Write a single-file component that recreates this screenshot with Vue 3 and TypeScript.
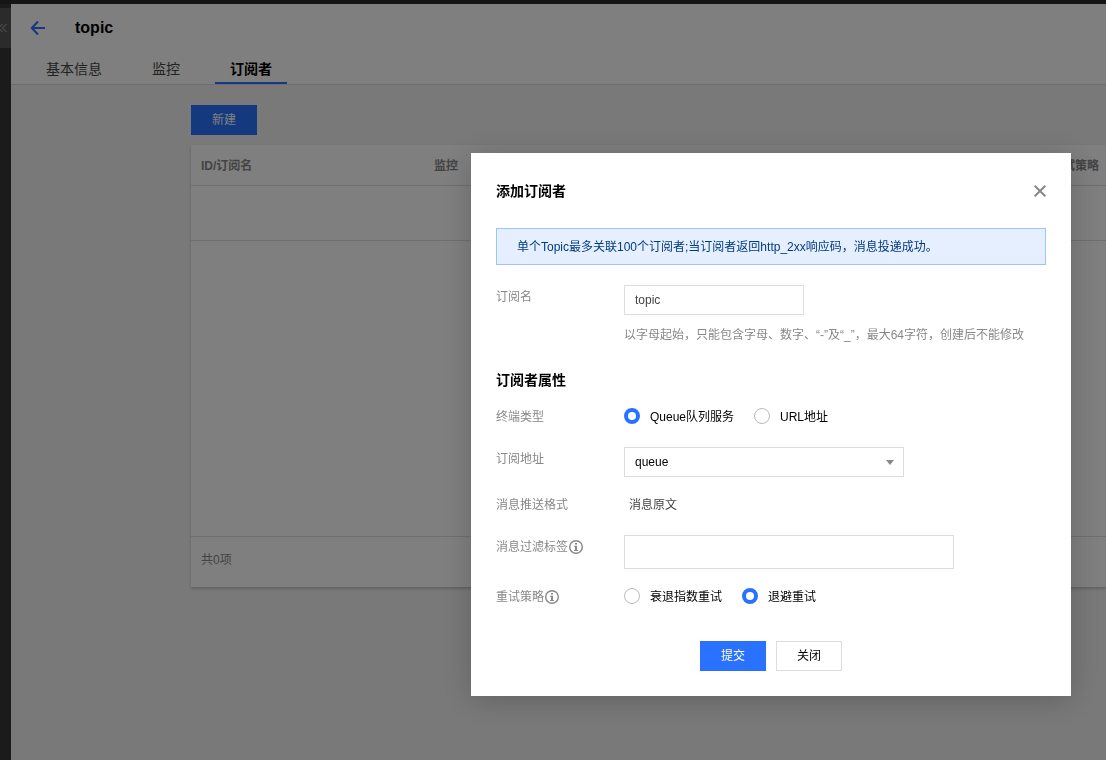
<script setup lang="ts">
import { ref } from 'vue'

const tabs = ['基本信息', '监控', '订阅者']
const activeTab = ref('订阅者')

const name = ref('topic')
const endpointType = ref('queue')
const address = ref('queue')
const filterTag = ref('')
const retry = ref('backoff')

const endpointOptions = [
  { value: 'queue', label: 'Queue队列服务' },
  { value: 'url', label: 'URL地址' },
]
const retryOptions = [
  { value: 'exponential', label: '衰退指数重试' },
  { value: 'backoff', label: '退避重试' },
]
</script>

<template>
  <div class="page">
    <div class="topbar"></div>
    <div class="shell">
      <aside class="rail">
        <button class="collapse" type="button" aria-label="展开">
          <svg width="8" height="10" viewBox="0 0 8 10" fill="none" stroke="currentColor">
            <path d="M2.5 1-1.5 5l4 4M6.5 1l-4 4 4 4" />
          </svg>
        </button>
      </aside>
      <main class="main">
        <header class="header">
          <div class="heading">
            <a class="back" href="#" aria-label="返回">
              <svg width="16" height="16" viewBox="0 0 16 16" fill="none" stroke="currentColor" stroke-width="2">
                <path d="M15 8H2M8 1.5 1.8 8 8 14.5" />
              </svg>
            </a>
            <h1>topic</h1>
          </div>
          <nav class="tabs">
            <a
              v-for="tab in tabs"
              :key="tab"
              href="#"
              :class="['tab', { active: tab === activeTab }]"
              @click.prevent="activeTab = tab"
            >{{ tab }}</a>
          </nav>
        </header>
        <section class="content">
          <button class="btn primary" type="button">新建</button>
          <div class="card">
            <table>
              <colgroup>
                <col class="col-id" />
                <col class="col-monitor" />
                <col />
              </colgroup>
              <thead>
                <tr><th>ID/订阅名</th><th>监控</th><th>重试策略</th></tr>
              </thead>
              <tbody>
                <tr><td colspan="3"></td></tr>
              </tbody>
            </table>
            <div class="blank"></div>
            <footer class="total">共0项</footer>
          </div>
        </section>
      </main>
    </div>

    <div class="overlay">
      <form class="dialog" role="dialog" aria-labelledby="dialog-title" @submit.prevent>
        <div class="dialog-head">
          <h2 id="dialog-title">添加订阅者</h2>
          <button class="close" type="button" aria-label="关闭">
            <svg width="12" height="12" viewBox="0 0 12 12" fill="none" stroke="currentColor" stroke-width="2">
              <path d="M.7.7l10.6 10.6M11.3.7.7 11.3" />
            </svg>
          </button>
        </div>

        <p class="notice">单个Topic最多关联100个订阅者;当订阅者返回http_2xx响应码，消息投递成功。</p>

        <div class="row">
          <label class="label" for="sub-name">订阅名</label>
          <div>
            <input id="sub-name" v-model="name" class="field name" type="text" />
            <p class="hint">以字母起始，只能包含字母、数字、“-”及“_”，最大64字符，创建后不能修改</p>
          </div>
        </div>

        <h3>订阅者属性</h3>

        <div class="rows">
          <div class="row" role="radiogroup" aria-labelledby="type-label">
            <span id="type-label" class="label">终端类型</span>
            <div class="radios">
              <label v-for="o in endpointOptions" :key="o.value">
                <input v-model="endpointType" type="radio" name="endpoint" :value="o.value" />{{ o.label }}
              </label>
            </div>
          </div>
          <div class="row">
            <label class="label" for="address">订阅地址</label>
            <div class="select">
              <select id="address" v-model="address" class="field">
                <option value="queue">queue</option>
              </select>
              <svg width="8" height="5" viewBox="0 0 8 5"><path d="M0 0h8L4 5z" fill="#888" /></svg>
            </div>
          </div>
          <div class="row">
            <span class="label">消息推送格式</span>
            <span class="static">消息原文</span>
          </div>
          <div class="row">
            <label class="label" for="filter">消息过滤标签<svg class="info" width="16" height="16" viewBox="0 0 16 16"><circle cx="8" cy="8" r="6.3" fill="none" stroke="currentColor" stroke-width="1.4" /><path d="M7 4h2v1.6H7zM6 6.8h3V11h1v1H6v-1h1V7.8H6z" fill="currentColor" /></svg></label>
            <input id="filter" v-model="filterTag" class="field filter" type="text" />
          </div>
          <div class="row" role="radiogroup" aria-labelledby="retry-label">
            <span id="retry-label" class="label">重试策略<svg class="info" width="16" height="16" viewBox="0 0 16 16"><circle cx="8" cy="8" r="6.3" fill="none" stroke="currentColor" stroke-width="1.4" /><path d="M7 4h2v1.6H7zM6 6.8h3V11h1v1H6v-1h1V7.8H6z" fill="currentColor" /></svg></span>
            <div class="radios">
              <label v-for="o in retryOptions" :key="o.value">
                <input v-model="retry" type="radio" name="retry" :value="o.value" />{{ o.label }}
              </label>
            </div>
          </div>
        </div>

        <div class="actions">
          <button class="btn primary" type="submit">提交</button>
          <button class="btn" type="button">关闭</button>
        </div>
      </form>
    </div>
  </div>
</template>

<style>
body {
  margin: 0;
}
</style>

<style scoped>
.page,
.page * {
  box-sizing: border-box;
}
.page {
  display: flex;
  flex-direction: column;
  min-height: 100vh;
  overflow: hidden;
  font: 12px/20px "Liberation Sans", "Noto Sans CJK SC", sans-serif;
  color: #000;
}
h1,
h2,
h3,
p {
  margin: 0;
}
a {
  text-decoration: none;
}
button,
input,
select {
  font: inherit;
  color: inherit;
}

.topbar {
  height: 4px;
  background: #2a2a2a;
}
.shell {
  display: flex;
  flex: 1;
}
.rail {
  width: 11px;
  padding-top: 4px;
  background: #363636;
}
.collapse {
  display: flex;
  align-items: center;
  width: 11px;
  height: 40px;
  padding: 0;
  border: 0;
  background: #565656;
  color: #bbb;
}
.main {
  flex: 1;
  min-width: 0;
  background: #f2f2f2;
}
.header {
  background: #fff;
  border-bottom: 1px solid #dcdcdc;
}
.heading {
  display: flex;
  align-items: center;
  gap: 29px;
  height: 48px;
  padding-left: 19px;
}
.back {
  display: flex;
  color: #2972ff;
}
.heading h1 {
  font-size: 16px;
  line-height: 24px;
}
.tabs {
  display: flex;
  gap: 20px;
  padding-left: 20px;
}
.tab {
  height: 32px;
  padding: 2px 15px 0;
  border-bottom: 2px solid transparent;
  font-size: 14px;
  line-height: 30px;
  color: #444;
}
.tab.active {
  border-color: #2972ff;
  font-weight: bold;
  color: #000;
}
.content {
  padding: 20px 0 20px 180px;
}
.btn {
  display: block;
  width: 66px;
  height: 30px;
  padding: 0;
  border: 1px solid #ddd;
  background: #fff;
  line-height: 28px;
}
.btn.primary {
  border-color: #2972ff;
  background: #2972ff;
  color: #fff;
}
.card {
  margin-top: 10px;
  background: #fff;
  box-shadow: 0 2px 3px rgba(0, 0, 0, 0.2);
  color: #888;
}
table {
  width: 100%;
  table-layout: fixed;
  border-spacing: 0;
}
.col-id {
  width: 233px;
}
.col-monitor {
  width: 617px;
}
th {
  height: 41px;
  padding: 1px 0 0 10px;
  border-bottom: 1px solid #ddd;
  text-align: left;
  white-space: nowrap;
}
td {
  height: 55px;
  border-bottom: 1px solid #ddd;
}
.blank {
  height: 295px;
}
.total {
  padding: 13px 10px 17px;
  border-top: 1px solid #ddd;
}

.overlay {
  position: fixed;
  inset: 0;
  display: flex;
  justify-content: flex-end;
  align-items: flex-start;
  padding: 153px 35px 64px;
  background: rgba(0, 0, 0, 0.5);
}
.dialog {
  width: 600px;
  padding: 28px 25px 25px;
  background: #fff;
  box-shadow: 0 4px 30px rgba(0, 0, 0, 0.2);
}
.dialog-head {
  display: flex;
  align-items: center;
  justify-content: space-between;
}
h2,
h3 {
  font-size: 14px;
  line-height: 20px;
}
.close {
  display: flex;
  padding: 0;
  border: 0;
  background: none;
  color: #888;
}
.notice {
  margin: 27px 0 20px;
  padding: 8px 20px 7px;
  border: 1px solid #97c7ff;
  background: #e5efff;
  color: #003b80;
}
.row {
  display: grid;
  grid-template-columns: 128px 1fr;
  align-items: start;
  min-height: 26px;
}
.label {
  display: flex;
  align-items: center;
  line-height: 24px;
  color: #888;
}
.field {
  display: block;
  width: 280px;
  height: 30px;
  padding: 0 10px;
  border: 1px solid #ddd;
  border-radius: 0;
  outline: 0;
  background: #fff;
}
.name {
  width: 180px;
  color: #444;
}
.filter {
  width: 330px;
  height: 34px;
}
.hint {
  margin-top: 10px;
  color: #888;
}
h3 {
  margin: 25px 0 15px;
}
.rows {
  display: grid;
  gap: 16px;
}
.radios {
  display: flex;
  gap: 20px;
  line-height: 24px;
}
.radios label {
  display: flex;
  align-items: center;
  gap: 10px;
}
.radios input {
  appearance: none;
  width: 16px;
  height: 16px;
  margin: 0 0 2px;
  border: 1px solid #bbb;
  border-radius: 50%;
  background: #fff;
}
.radios input:checked {
  border: 4px solid #2972ff;
}
.select {
  position: relative;
  width: 280px;
}
.select select {
  appearance: none;
}
.select svg {
  position: absolute;
  top: 13px;
  right: 10px;
  pointer-events: none;
}
.static {
  padding-left: 5px;
  line-height: 24px;
  color: #444;
}
.actions {
  display: flex;
  justify-content: center;
  gap: 10px;
  margin-top: 30px;
}
</style>
